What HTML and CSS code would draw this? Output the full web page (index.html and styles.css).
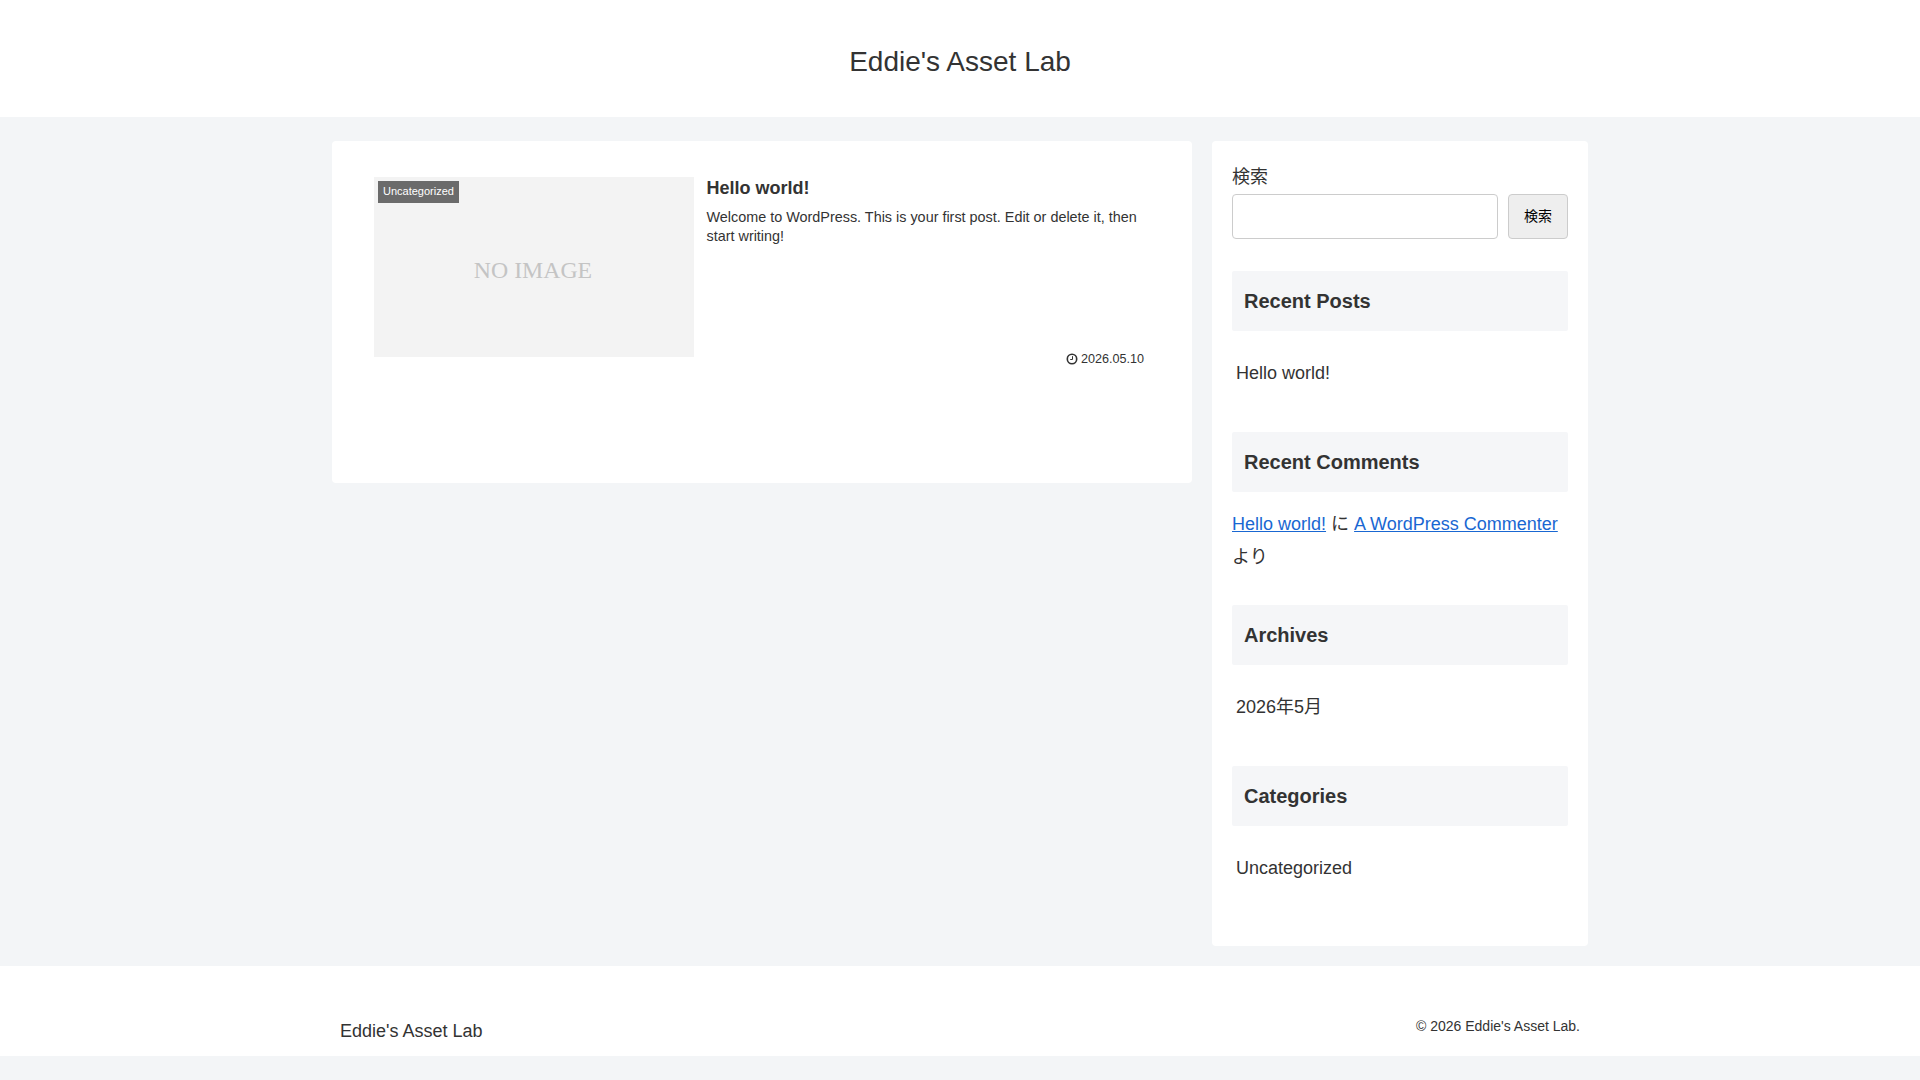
FILE: index.html
```html
<!DOCTYPE html>
<html lang="ja">
<head>
    <meta charset="UTF-8">
    <meta name="viewport" content="width=device-width, initial-scale=1.0">
    <title>Eddie's Asset Lab</title>
    <link rel="stylesheet" href="styles.css">
</head>
<body>
    <header class="header">
        <h1 class="site-name"><a href="#">Eddie's Asset Lab</a></h1>
    </header>

    <div class="content wrap">
        <main class="main">
            <a class="entry-card" href="#">
                <div class="thumb">
                    <span class="no-image">NO IMAGE</span>
                    <span class="cat-label">Uncategorized</span>
                </div>
                <div class="card-content">
                    <h2 class="card-title">Hello world!</h2>
                    <p class="snippet">Welcome to WordPress. This is your first post. Edit or delete it, then start writing!</p>
                    <div class="post-date">
                        <svg class="clock" viewBox="0 0 12 12">
                            <circle cx="6" cy="6" r="4.7"></circle>
                            <path d="M6.5 3.2v3.3H4.2"></path>
                        </svg>
                        <span>2026.05.10</span>
                    </div>
                </div>
            </a>
        </main>

        <aside class="sidebar">
            <section class="widget">
                <form class="search">
                    <label for="search">検索</label>
                    <div class="search-row">
                        <input type="search" id="search">
                        <button type="submit">検索</button>
                    </div>
                </form>
            </section>
            <section class="widget">
                <h2>Recent Posts</h2>
                <ul>
                    <li><a href="#">Hello world!</a></li>
                </ul>
            </section>
            <section class="widget">
                <h2>Recent Comments</h2>
                <p class="comment"><a href="#">Hello world!</a> に <a href="#">A WordPress Commenter</a> より</p>
            </section>
            <section class="widget">
                <h2>Archives</h2>
                <ul>
                    <li><a href="#">2026年5月</a></li>
                </ul>
            </section>
            <section class="widget">
                <h2>Categories</h2>
                <ul>
                    <li><a href="#">Uncategorized</a></li>
                </ul>
            </section>
        </aside>
    </div>

    <footer class="footer">
        <div class="footer-in wrap">
            <a class="footer-name" href="#">Eddie's Asset Lab</a>
            <div class="copyright">© 2026 Eddie's Asset Lab.</div>
        </div>
    </footer>
</body>
</html>
```
FILE: styles.css
```css
* {
    box-sizing: border-box;
    margin: 0;
    padding: 0;
}
body {
    font-family: "Liberation Sans", "Noto Sans CJK JP", sans-serif;
    font-size: 18px;
    line-height: 1.8;
    color: #333;
    background-color: #f3f5f7;
}
a {
    color: #333;
    text-decoration: none;
}
.wrap {
    width: 1256px;
    margin: 0 auto;
}

/* header */
.header {
    height: 117px;
    padding-top: 37px;
    text-align: center;
    background-color: #fff;
}
.site-name {
    font-size: 28px;
    font-weight: normal;
}

/* columns */
.content {
    display: flex;
    align-items: flex-start;
    gap: 20px;
    margin-top: 24px;
    margin-bottom: 20px;
}
.main {
    width: 860px;
    height: 342px;
    padding: 36px 42px;
    border-radius: 4px;
    background-color: #fff;
}
.sidebar {
    width: 376px;
    height: 805px;
    padding: 20px;
    border-radius: 4px;
    background-color: #fff;
}

/* entry card */
.entry-card {
    display: flex;
    gap: 12.5px;
}
.thumb {
    position: relative;
    flex: none;
    display: flex;
    align-items: center;
    justify-content: center;
    width: 320px;
    height: 180px;
    background-color: #f3f3f3;
}
.no-image {
    padding-top: 6px;
    padding-right: 2px;
    font-family: "Liberation Serif", serif;
    font-size: 23.8px;
    color: #c4c4c4;
}
.cat-label {
    position: absolute;
    top: 4px;
    left: 4px;
    width: 81px;
    height: 22px;
    padding-top: 1px;
    padding-left: 5px;
    font-size: 11px;
    color: #fff;
    background-color: #6b6b6b;
}
.card-content {
    flex: 1;
    display: flex;
    flex-direction: column;
    height: 192px;
}
.card-title {
    margin-bottom: 8px;
    font-size: 18px;
    line-height: 1.3;
}
.snippet {
    width: 440px;
    font-size: 14.4px;
    line-height: 1.3;
}
.post-date {
    display: flex;
    align-items: center;
    justify-content: flex-end;
    gap: 3px;
    margin-top: auto;
    padding-right: 6px;
    font-size: 12.6px;
    line-height: 20px;
}
.clock {
    width: 12px;
    height: 12px;
    fill: none;
    stroke: #333;
    stroke-width: 1.6;
}
.clock path {
    stroke-width: 1;
}

/* widgets */
.widget {
    margin-bottom: 32.4px;
}
.widget h2 {
    margin-bottom: 16px;
    padding: 12px;
    font-size: 20px;
    border-radius: 2px;
    background-color: #f5f6f8;
}
.widget ul {
    list-style: none;
}
.widget li a {
    display: block;
    padding: 10px 4px;
}
.comment a {
    color: #1967d2;
    text-decoration: underline;
}
.search label {
    display: block;
    margin-bottom: 0.6px;
}
.search-row {
    display: flex;
    gap: 10px;
    height: 45px;
}
.search input {
    width: 266px;
    border: 1px solid #ccc;
    border-radius: 4px;
}
.search button {
    width: 60px;
    padding-bottom: 3px;
    font-family: inherit;
    font-size: 14px;
    border: 1px solid #ccc;
    border-radius: 4px;
    color: #000;
    background-color: #eee;
}

/* footer */
.footer {
    height: 90px;
    background-color: #fff;
}
.footer-in {
    display: flex;
    justify-content: space-between;
    padding: 48px 8px 0;
}
.footer-name {
    padding-top: 1px;
}
.copyright {
    font-size: 14px;
}
```
